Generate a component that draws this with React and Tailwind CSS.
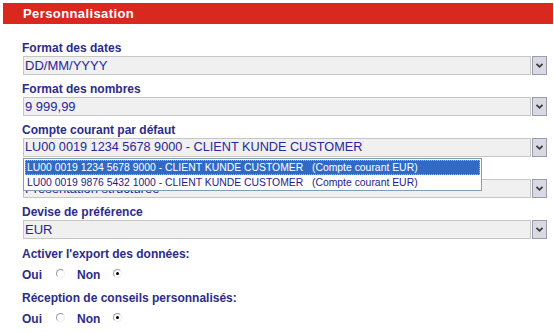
import React from 'react';

const font = "font-['Liberation_Sans',Arial,sans-serif]";

function Chevron() {
  return (
    <svg width="9" height="7" viewBox="0 0 9 7">
      <path d="M1.5 1.8 L4.5 4.8 L7.5 1.8" fill="none" stroke="#3a3a3a" strokeWidth="1.8" />
    </svg>
  );
}

function Select({ value, big }) {
  return (
    <div className="flex h-[19px] ml-[1px] w-[524px]">
      <div className={`flex-1 flex items-center bg-[#f0f0f0] border border-[#c6c6c6] pl-[1px] leading-[17px] text-[#27279a] ${big ? 'text-[12.7px]' : 'text-[13px]'}`}>
        {value}
      </div>
      <div className="ml-[1px] w-[15px] flex items-center justify-center bg-[#d9d9e4] border border-[#9b9bab]">
        <Chevron />
      </div>
    </div>
  );
}

function Label({ children, className = '' }) {
  return (
    <div className={`text-[12px] leading-[15px] font-bold text-[#2c2c8a] ${className}`}>{children}</div>
  );
}

function Radio({ checked, className = '' }) {
  return (
    <span className={`relative mt-[1px] w-[9px] h-[9px] rounded-full border border-t-[#9c9c9c] border-l-[#9c9c9c] border-b-[#ececec] border-r-[#ececec] bg-white flex items-center justify-center ${className}`}>
      {checked && <span className="w-[3px] h-[3px] rounded-full bg-black" />}
    </span>
  );
}

function RadioRow({ className = '' }) {
  return (
    <div className={`flex items-start text-[12px] leading-[15px] font-bold text-[#2c2c8a] ${className}`}>
      <span>Oui</span>
      <Radio className="ml-[14px]" />
      <span className="ml-[12px]">Non</span>
      <Radio checked className="ml-[13px]" />
    </div>
  );
}

export default function App() {
  const accounts = [
    'LU00 0019 1234 5678 9000 - CLIENT KUNDE CUSTOMER',
    'LU00 0019 9876 5432 1000 - CLIENT KUNDE CUSTOMER',
  ];

  return (
    <div className={`w-[554px] h-[333px] bg-white overflow-hidden ${font}`}>
      <div className="mt-[3px] ml-[3px] mr-[1px] h-[21px] bg-[#d9281e] pl-[20px] text-white text-[13px] font-bold leading-[21px] tracking-[0.4px]">
        Personnalisation
      </div>

      <div className="pl-[22px]">
        <Label className="mt-[17px]">Format des dates</Label>
        <Select value="DD/MM/YYYY" />

        <Label className="mt-[7px]">Format des nombres</Label>
        <Select value="9 999,99" />

        <Label className="mt-[7px]">Compte courant par défaut</Label>
        <div className="relative">
          <Select value={accounts[0]} big />
          {/* open dropdown list */}
          <div className="absolute left-[1px] top-[20px] w-[459px] bg-white border border-[#7f9db9] pt-[1px] px-[1px] z-10">
            {accounts.map((a, i) => (
              <div
                key={a}
                className={`h-[15px] flex items-center text-[10.4px] whitespace-pre ${
                  i === 0 ? 'bg-[#316ac5] text-white border border-dotted border-[#f0b040] pl-[1px]' : 'text-[#1c1c8c] pl-[2px]'
                }`}
              >
                {a + '   (Compte courant EUR)'}
              </div>
            ))}
          </div>
        </div>

        {/* label hidden under the open list */}
        <Label className="mt-[7px] invisible">Présentation</Label>
        <Select value="Présentation structurée" />

        <Label className="mt-[7px]">Devise de préférence</Label>
        <Select value="EUR" />

        <Label className="mt-[8px]">Activer l'export des données:</Label>
        <RadioRow className="mt-[6px]" />

        <Label className="mt-[8px]">Réception de conseils personnalisés:</Label>
        <RadioRow className="mt-[6px]" />
      </div>
    </div>
  );
}
